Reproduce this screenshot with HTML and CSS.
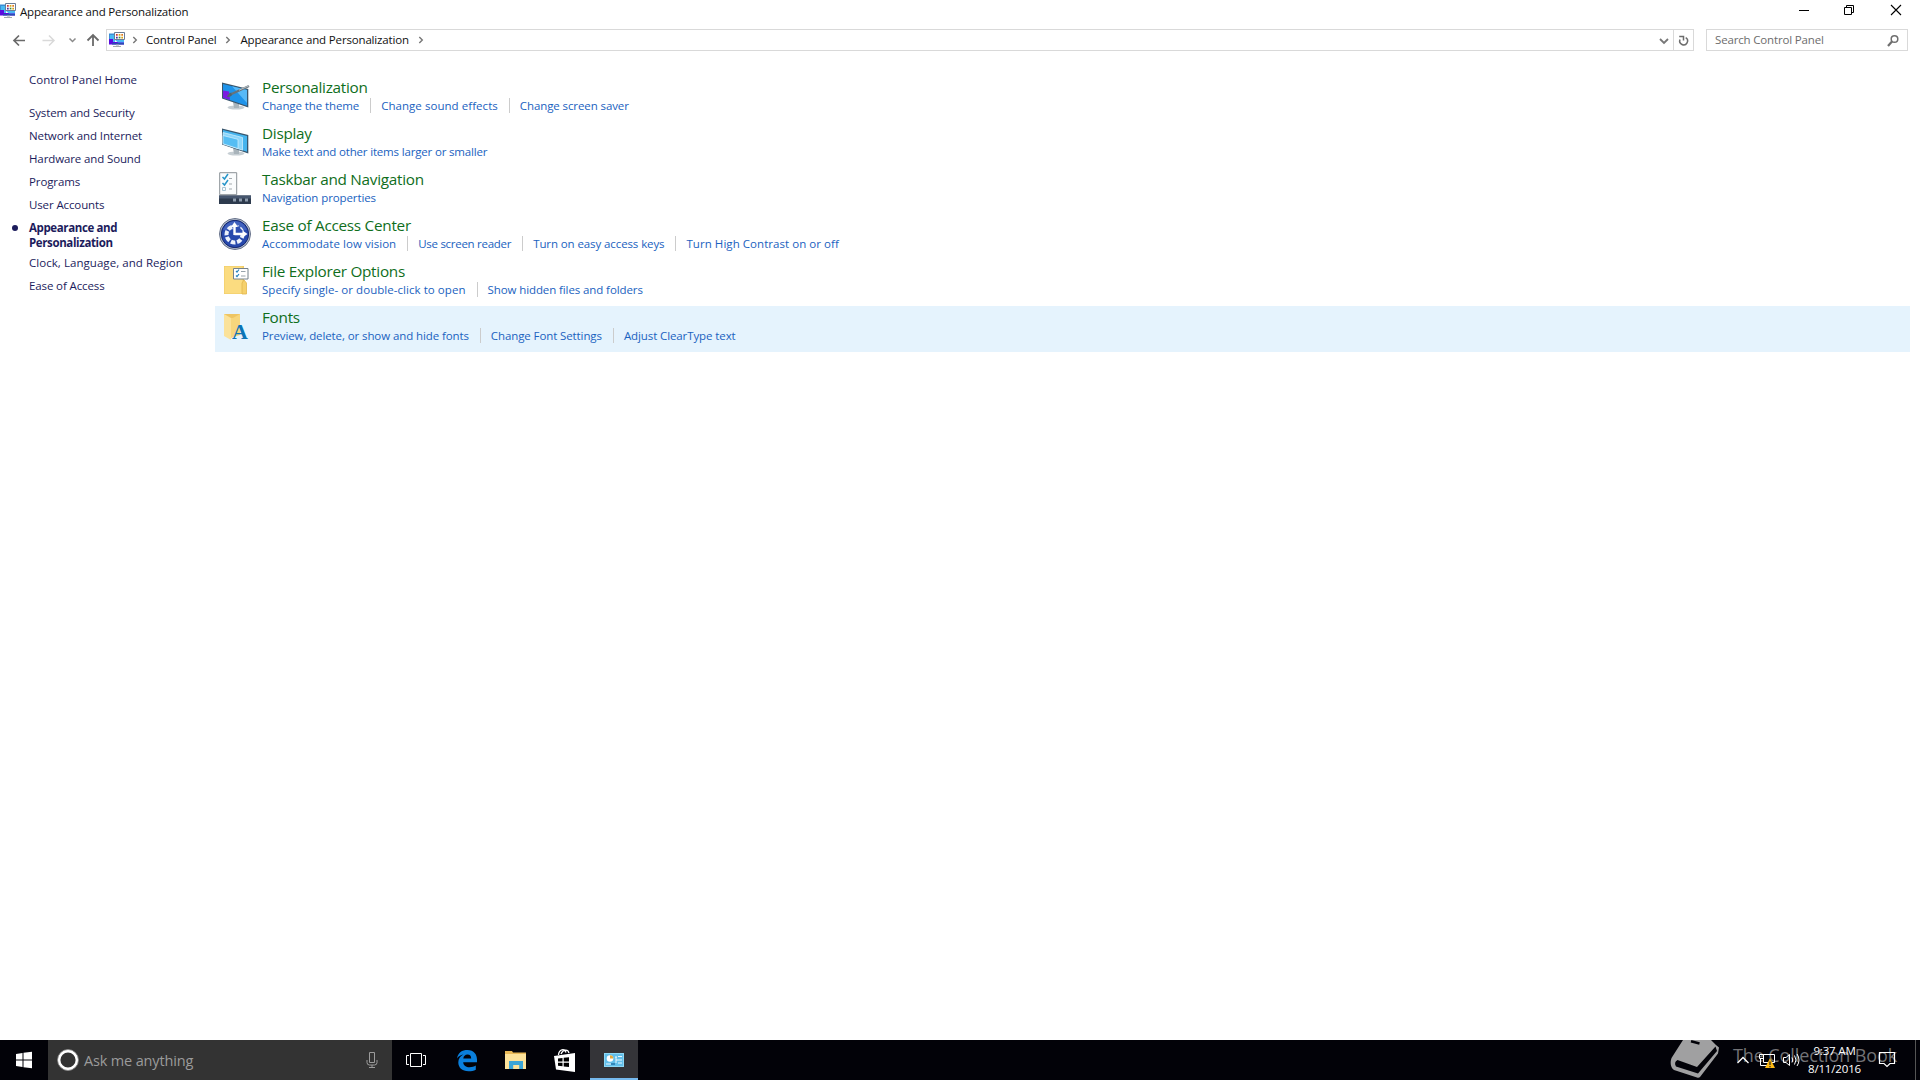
FILE: index.html
```html
<!DOCTYPE html>
<html lang="en">
<head>
    <meta charset="UTF-8">
    <meta name="viewport" content="width=device-width, initial-scale=1.0">
    <title>Appearance and Personalization</title>
    <link rel="stylesheet" href="styles.css">
</head>
<body>
    <!-- Shared icon, used in the title bar and the address bar -->
    <svg class="defs" width="0" height="0">
        <symbol id="cp-icon" viewBox="0 0 16 16">
            <path d="M0 1.5h6v10H0z" fill="#3b8fd6"/>
            <path d="M1 3h5v8H1z" fill="#49b9f2"/>
            <path d="M0 7h4v3h11v2.500H0z" fill="#5a0be0"/>
            <path d="M6 8h9v2.500H9z" fill="#49b9f2"/>
            <path d="M3 11h12v1.500H3z" fill="#2a4fae"/>
            <path d="M7 12.500h3v1H7zM4 14h8v1H4z" fill="#a4abb0"/>
            <path d="M5.500.5h10v7h-10z" fill="#fff" stroke="#6b7d96"/>
            <path d="M7 2h1.700v1.700H7z" fill="#c33"/>
            <path d="M9.700 2h1.700v1.700H9.700zM12.300 4.700H14v1.700h-1.700z" fill="#d9a514"/>
            <path d="M12.300 2H14v1.700h-1.700z" fill="#e07b1e"/>
            <path d="M7 4.700h1.700v1.700H7z" fill="#4a2aa0"/>
            <path d="M9.700 4.700h1.700v1.700H9.700z" fill="#388e3c"/>
        </symbol>
    </svg>

    <div class="window">
        <header class="title-bar">
            <svg class="small-icon" viewBox="0 0 16 16"><use href="#cp-icon"/></svg>
            <span class="window-title">Appearance and Personalization</span>
            <div class="window-buttons">
                <svg viewBox="0 0 46 20"><path d="M18 10.500h10" stroke="#000"/></svg>
                <svg viewBox="0 0 46 20"><path d="M17.500 7.500h7v7h-7zM19.500 7.500v-2h7v7h-2" fill="none" stroke="#000"/></svg>
                <svg viewBox="0 0 46 20"><path d="M18 5l10 10M28 5L18 15" stroke="#000" stroke-width="1.100"/></svg>
            </div>
        </header>

        <nav class="nav-bar">
            <svg class="nav-arrows" width="106" height="22" viewBox="0 0 106 22" fill="none">
                <path d="M25 11.500H14M19 6.500l-5 5 5 5" stroke="#6a6a6a" stroke-width="1.700"/>
                <path d="M42.500 11.500H54M49 6.500l5 5-5 5" stroke="#d9d9d9" stroke-width="1.500"/>
                <path d="M69.500 9.500l3 3 3-3" stroke="#8a8a8a" stroke-width="1.500"/>
                <path d="M93 17V6M87.500 11.500L93 6l5.500 5.500" stroke="#6a6a6a" stroke-width="1.800"/>
            </svg>
            <div class="address">
                <svg class="small-icon" viewBox="0 0 16 16"><use href="#cp-icon"/></svg>
                <svg class="crumb-arrow" viewBox="0 0 6 8"><path d="M1.300 1l3 3-3 3"/></svg>
                <span>Control Panel</span>
                <svg class="crumb-arrow" viewBox="0 0 6 8"><path d="M1.300 1l3 3-3 3"/></svg>
                <span>Appearance and Personalization</span>
                <svg class="crumb-arrow" viewBox="0 0 6 8"><path d="M1.300 1l3 3-3 3"/></svg>
                <svg class="address-drop" viewBox="0 0 18 20"><path d="M5 9l4 4 4-4" fill="none" stroke="#777" stroke-width="1.800"/></svg>
                <svg class="refresh" viewBox="0 0 20 20" fill="none" stroke="#6c6c6c" stroke-width="1.600"><path d="M12.300 7.500A4.100 4.100 0 1 1 6.300 9.500M5.500 6.300H10V10.500"/></svg>
            </div>
            <div class="search">
                <span>Search Control Panel</span>
                <svg width="14" height="14" viewBox="0 0 14 14" fill="none" stroke="#6f6f6f"><circle cx="8.500" cy="6" r="3.300" stroke-width="1.500"/><path d="M6 8.500L2 13" stroke-width="2.200"/></svg>
            </div>
        </nav>

        <div class="content">
            <aside class="sidebar">
                <a class="home">Control Panel Home</a>
                <a>System and Security</a>
                <a>Network and Internet</a>
                <a>Hardware and Sound</a>
                <a>Programs</a>
                <a>User Accounts</a>
                <a class="current">Appearance and Personalization</a>
                <a class="loose">Clock, Language, and Region</a>
                <a>Ease of Access</a>
            </aside>

            <main class="categories">
                <section class="category">
                    <svg class="icon" viewBox="0 0 32 32">
                        <ellipse cx="17" cy="27.500" rx="8.500" ry="2" fill="#c6ced3"/>
                        <path d="M14 22l6 2v4h-5z" fill="#a9b4bb"/>
                        <path d="M3 2.500L29.300 9v18.500L3 18.500z" fill="#38566d"/>
                        <path d="M4 4l24 6v15.700L4 17.800z" fill="#1e93ea"/>
                        <path d="M13 6.300L28 10v13z" fill="#57b9f7"/>
                        <path d="M4 10.500l6 1 1 8.500-7-2.200z" fill="#7a1be0"/>
                        <path d="M8 17c1-3 3-5 5-4 1 2-1 4-5 4z" fill="#51636e"/>
                        <path d="M12.500 14L30 6" stroke="#67737b" stroke-width="2"/>
                        <path d="M20 10.200L30 5.700" stroke="#cfd6da" stroke-width=".8"/>
                    </svg>
                    <div class="text">
                        <h2>Personalization</h2>
                        <div class="links"><a>Change the theme</a><a class="loose">Change sound effects</a><a>Change screen saver</a></div>
                    </div>
                </section>
                <section class="category">
                    <svg class="icon" viewBox="0 0 32 32">
                        <ellipse cx="17" cy="27.500" rx="8.500" ry="2" fill="#c6ced3"/>
                        <path d="M14 22l6 2v4h-5z" fill="#a9b4bb"/>
                        <path d="M3 2.500L29.300 9v18.500L3 18.500z" fill="#38566d"/>
                        <path d="M4 4l24 6v15.700L4 17.800z" fill="#45b4ee"/>
                        <path d="M4 6.500l19.500 5v12.700L4 17.800z" fill="#8bd6fb" stroke="#d5f1fd" stroke-width=".7"/>
                        <path d="M4 9.500l15 3.800v9.300L4 17.800z" fill="#55bdf3" stroke="#d5f1fd" stroke-width=".7"/>
                    </svg>
                    <div class="text">
                        <h2>Display</h2>
                        <div class="links"><a class="tight">Make text and other items larger or smaller</a></div>
                    </div>
                </section>
                <section class="category">
                    <svg class="icon" viewBox="0 0 32 32">
                        <path d="M.7.700h17v22h-17z" fill="#fafcfd" stroke="#8b9297"/>
                        <path d="M3.500 5l2 2 3.500-5M3.500 11l2 2 3.500-5" fill="none" stroke="#2795c9" stroke-width="1.500"/>
                        <path d="M3.500 15.500h3v3h-3z" fill="none" stroke="#a8c4d3"/>
                        <path d="M10 6.500h3M10 12h3M10 17h3" stroke="#a3a9ad"/>
                        <path d="M0 23.500h32V32H0z" fill="#2d3a4d"/>
                        <path d="M0 23.500h32v3H0z" fill="#46566e"/>
                        <path d="M14 26.500h3v3h-3zM20 26.500h3v3h-3zM26 26.500h3v3h-3z" fill="#8e9cad"/>
                    </svg>
                    <div class="text">
                        <h2>Taskbar and Navigation</h2>
                        <div class="links"><a>Navigation properties</a></div>
                    </div>
                </section>
                <section class="category">
                    <svg class="icon" viewBox="0 0 32 32">
                        <circle cx="16" cy="16" r="15.500" fill="#b9c2cf" stroke="#66718a"/>
                        <circle cx="16" cy="16" r="13.700" fill="#2749ad" stroke="#14256d"/>
                        <path d="M4 12a12.500 12.500 0 0 1 24 0z" fill="#5272c8" opacity=".6"/>
                        <circle cx="15.500" cy="16.500" r="8" fill="none" stroke="#edf2fb" stroke-width="4" stroke-dasharray="4.600 1.683" stroke-dashoffset="1"/>
                        <path d="M15.500 4.500L27 16H15.500z" fill="#2f50b2"/>
                        <path d="M15.500 17V8M15.500 16H24" stroke="#fff" stroke-width="2.400"/>
                        <path d="M12 9l3.500-5L19 9zM23.500 12.500l5 3.500-5 3.500z" fill="#fff"/>
                    </svg>
                    <div class="text">
                        <h2>Ease of Access Center</h2>
                        <div class="links"><a class="loose">Accommodate low vision</a><a class="tighter">Use screen reader</a><a>Turn on easy access keys</a><a class="loose">Turn High Contrast on or off</a></div>
                    </div>
                </section>
                <section class="category">
                    <svg class="icon" viewBox="0 0 32 32">
                        <path d="M5 2h20v28H5z" fill="#f0ca64"/>
                        <path d="M5.500 2.500h18v27h-18z" fill="#fbdc80"/>
                        <path d="M23 30V19l2-3 2.500 3v11z" fill="#f6d16c" stroke="#e2b64e" stroke-width=".8"/>
                        <path d="M14.500 4.500H29V15H14.500z" fill="#fff" stroke="#75828c"/>
                        <path d="M17 7l1 1 2-2.500M17 11.500l1 1 2-2.500" fill="none" stroke="#2582bb" stroke-width="1.200"/>
                        <path d="M22 7.500h4.500M22 12h4.500" stroke="#98a4ac"/>
                    </svg>
                    <div class="text">
                        <h2>File Explorer Options</h2>
                        <div class="links"><a class="loose">Specify single- or double-click to open</a><a>Show hidden files and folders</a></div>
                    </div>
                </section>
                <section class="category hovered">
                    <svg class="icon" viewBox="0 0 32 32">
                        <path d="M5 4h16v21H5z" fill="#eec563"/>
                        <path d="M5 4l7 4v22l-7-4z" fill="#fbe29a"/>
                        <path d="M12 8h2l7-4v21l-9 3z" fill="#f7d67c"/>
                        <text class="font-letter" x="13" y="29" fill="#0b74b5">A</text>
                    </svg>
                    <div class="text">
                        <h2>Fonts</h2>
                        <div class="links"><a>Preview, delete, or show and hide fonts</a><a>Change Font Settings</a><a>Adjust ClearType text</a></div>
                    </div>
                </section>
            </main>
        </div>
    </div>

    <footer class="taskbar">
        <svg class="start" viewBox="0 0 48 40"><path d="M16 14l6.500-1v6.500H16zM23.500 12.800L32 11.700v7.800h-8.500zM16 20.500h6.500V27L16 26zM23.500 20.500H32v7.800l-8.500-1.100z" fill="#fff"/></svg>
        <div class="cortana">
            <svg width="22" height="22" viewBox="0 0 22 22"><circle cx="11" cy="11" r="9" fill="none" stroke="#fff" stroke-width="2.800"/><circle cx="11" cy="11" r="10.500" fill="none" stroke="#8b8b8b" stroke-width=".8"/></svg>
            <span>Ask me anything</span>
            <svg class="mic" width="12" height="18" viewBox="0 0 12 18" fill="none" stroke="#9b9b9b"><path d="M3.500 1.500h5v10h-5zM1 9v2.500q0 2.500 2.500 2.500h5q2.500 0 2.500-2.500V9M6 14v2.500M3 16.500h6"/></svg>
        </div>
        <div class="apps">
            <svg class="task-view" viewBox="0 0 48 40"><path d="M18.500 13.500h11v13h-11zM17 15.500h-2.500v9H17M31 15.500h2.500v9H31" fill="none" stroke="#fff"/></svg>
            <svg viewBox="0 0 48 40"><path d="M14 18.500C15 12.500 19 10 24.500 10 31 10 34 14.500 34 19.500v2.700H20.200c.2 3.500 3 5 6.300 5 2.500 0 4.700-.7 6.300-1.700v4.200c-2 1.100-4.500 1.600-7.300 1.600-6.500 0-10.200-3.800-10.200-9 0-3.800 2.200-6.500 5.200-7.900-3 .3-5.200 2-6.500 4.100zM20.300 18.500h7.900c0-2.400-1.200-3.900-3.700-3.900-2.400 0-3.900 1.700-4.200 3.900z" fill="#0a7fdc"/></svg>
            <svg viewBox="0 0 48 40"><path d="M13 11h7l1 1.500h13V29H13z" fill="#e9b957"/><path d="M13 14h21v15H13z" fill="#fce29a"/><path d="M17 29v-8h14v8h-3.800v-4h-6v4z" fill="#3ba5d6"/></svg>
            <svg viewBox="0 0 48 40"><path d="M17.500 15c.5-6 6-7 7.500-2.500M20 14c2-5 7-5 8-1" fill="none" stroke="#fff" stroke-width="1.300"/><path d="M13 16l21-3v19l-19-2.500z" fill="#fff"/><path d="M17 18.500l4.500-.5v3.500H17zM22.700 17.800l5.300-.6v4.300h-5.300zM17 22.700h4.500v3.600l-4.500-.5zM22.700 22.700H28V27l-5.300-.6z" fill="#000"/></svg>
            <svg class="running" viewBox="0 0 48 38"><path d="M14 13h20v14H14z" fill="#8ed8f5"/><path d="M15 14h18v12H15z" fill="#62bee9"/><circle cx="20" cy="18.500" r="3.300" fill="#fff"/><path d="M20 18.500v-3.300a3.300 3.300 0 0 1 3.300 3.300z" fill="#e5a93d"/><path d="M25 17h2m-1 0v6m0-3h2M28 16.500h4M28 20h4M28 23h4M16 24h5" stroke="#e8f8ff"/><path d="M21 24h4" stroke="#2475a8" stroke-width="1.500"/></svg>
        </div>
        <div class="tray">
            <svg width="14" height="40" viewBox="0 0 14 40"><path d="M1.500 23L7 17.500l5.500 5.500" fill="none" stroke="#fff" stroke-width="1.300"/></svg>
            <svg class="network" width="18" height="40" viewBox="0 0 18 40"><path d="M5.500 14.500h11v8h-11zM1.500 14.500h4v4h-4zM2.500 19v6.500H9M11 23v3" fill="none" stroke="#fff"/><path d="M12 18l5 10H7z" fill="#fdb913"/><path d="M12 21.500v3.500M12 26v1.200" stroke="#222" stroke-width="1.200"/></svg>
            <svg class="volume" width="18" height="40" viewBox="0 0 18 40"><path d="M1.500 17.500H4l3.500-3v11L4 22.500H1.500zM10 17.500q1.500 2.500 0 5M12.500 15.500q3 4.500 0 9M15 14q4 6 0 12" fill="none" stroke="#fff"/></svg>
            <div class="clock">
                <span>9:37 AM</span>
                <span>8/11/2016</span>
            </div>
            <svg class="action-center" width="18" height="40" viewBox="0 0 18 40"><path d="M1.500 12.500h15v11H12l-3 3-3-3H1.500z" fill="none" stroke="#fff" stroke-width="1.200"/></svg>
            <span class="show-desktop"></span>
        </div>
        <div class="watermark">
            <svg width="51" height="40" viewBox="0 0 51 40">
                <path d="M13 0H41L46 5l3 2.500-1 6L30 37q-1 1.200-3 .6L4 30Q-1 26 1.500 18z" fill="#a0a0a1"/>
                <path d="M7.500 20L27 27 45.500 6.500 47 11 28 33.500 6 26.500Q3.500 22 7.500 20z" fill="#020208"/>
                <path d="M21 1.300l8.500 2.200" stroke="#020208" stroke-width="2.500"/>
            </svg>
            <span>The Collection Book</span>
        </div>
    </footer>
</body>
</html>
```
FILE: styles.css
```css
:root {
    --border: #d9d9d9;
    --link: #1a62c0;
    --heading: #0f6e1c;
    --side: #1c1c5c;
}

* {
    margin: 0;
    padding: 0;
    box-sizing: border-box;
}

body {
    width: 1920px;
    height: 1080px;
    overflow: hidden;
    display: flex;
    flex-direction: column;
    background: #fff;
    color: #111;
    font-family: "Open Sans", "Noto Sans", sans-serif;
    font-size: 11.5px;
    letter-spacing: -0.16px;
    white-space: nowrap;
}

svg {
    display: block;
    flex-shrink: 0;
}

.defs {
    position: absolute;
}

.window {
    flex: 1;
}

.small-icon {
    width: 16px;
    height: 16px;
}

/* Title bar */
.title-bar {
    display: flex;
    align-items: center;
    height: 23px;
}

.title-bar .small-icon {
    margin-bottom: 2px;
}

.window-title {
    margin-left: 4px;
}

.window-buttons {
    display: flex;
    margin: 0 1px 3px auto;
}

.window-buttons svg {
    width: 46px;
    height: 20px;
}

/* Navigation bar */
.nav-bar {
    display: flex;
    align-items: center;
    height: 22px;
    margin-top: 6px;
    padding-right: 12px;
}

.address {
    display: flex;
    align-items: center;
    flex: 1;
    height: 22px;
    padding-left: 2px;
    border: 1px solid var(--border);
}

.address span,
.search span {
    margin-bottom: 2px;
}

.address .small-icon {
    margin-bottom: 1px;
}

.crumb-arrow {
    width: 6px;
    height: 8px;
    margin: 0 9px;
    fill: none;
    stroke: #777;
    stroke-width: 1.4;
}

.address .small-icon + .crumb-arrow {
    margin: 0 8px 0 7px;
}

.address-drop {
    width: 18px;
    height: 20px;
    margin-left: auto;
}

.refresh {
    width: 20px;
    height: 20px;
    border-left: 1px solid var(--border);
}

.search {
    display: flex;
    align-items: center;
    justify-content: space-between;
    width: 202px;
    height: 22px;
    margin-left: 12px;
    padding: 0 7px 0 8px;
    border: 1px solid var(--border);
    color: #6d6d6d;
}

/* Content */
.content {
    display: flex;
    padding-right: 10px;
}

.sidebar {
    display: flex;
    flex-direction: column;
    gap: 8px;
    width: 215px;
    padding: 21px 0 0 29px;
    color: var(--side);
    line-height: 15px;
    letter-spacing: -0.12px;
}

.sidebar .home {
    margin-bottom: 10px;
    letter-spacing: 0;
}

.sidebar .current {
    position: relative;
    width: 120px;
    margin-bottom: -3px;
    font-weight: bold;
    letter-spacing: -0.38px;
    white-space: normal;
}

.sidebar .current::before {
    content: "";
    position: absolute;
    left: -17px;
    top: 5px;
    width: 6px;
    height: 6px;
    border-radius: 50%;
    background: var(--side);
}

.categories {
    flex: 1;
    padding-top: 25px;
}

.category {
    display: flex;
    height: 46px;
    padding: 4px;
}

.category.hovered {
    background: #e5f3fd;
}

.icon {
    width: 32px;
    height: 32px;
    overflow: visible;
}

.font-letter {
    font-family: "Liberation Serif", serif;
    font-size: 22px;
    font-weight: bold;
}

.text {
    margin-left: 11px;
}

.category h2 {
    height: 18px;
    color: var(--heading);
    font-size: 15.3px;
    font-weight: normal;
    line-height: 14px;
    letter-spacing: -0.27px;
}

.links {
    display: flex;
    color: var(--link);
    line-height: 15px;
    letter-spacing: -0.1px;
}

.links a + a {
    margin-left: 11px;
    padding-left: 10px;
    border-left: 1px solid #ccc;
}

.tight {
    letter-spacing: -0.17px;
}

.tighter {
    letter-spacing: -0.28px;
}

.loose {
    letter-spacing: 0.05px;
}

/* Taskbar */
.taskbar {
    position: relative;
    display: flex;
    height: 40px;
    background: #020208;
    color: #fff;
}

.start {
    width: 48px;
    height: 40px;
}

.cortana {
    display: flex;
    align-items: center;
    width: 344px;
    padding: 0 14px 0 9px;
    background: #333;
    color: #9b9b9b;
    font-size: 14.5px;
}

.cortana span {
    margin-left: 5px;
}

.mic {
    margin-left: auto;
}

.apps {
    display: flex;
    gap: 1px;
}

.apps svg {
    width: 48px;
    height: 40px;
}

.apps .task-view {
    margin-right: 2px;
}

.apps .running {
    background: #343438;
    border-bottom: 2px solid #76b9ed;
}

.tray {
    position: relative;
    z-index: 1;
    display: flex;
    margin-left: auto;
}

.network {
    margin-left: 8px;
}

.volume {
    margin-left: 6px;
}

.clock {
    display: flex;
    flex-direction: column;
    align-items: center;
    width: 69px;
    padding-top: 2px;
    line-height: 18px;
}

.action-center {
    margin-left: 9px;
}

.show-desktop {
    width: 5px;
    margin-left: 19px;
    border-left: 1px solid #555;
}

.watermark {
    position: absolute;
    left: 1670px;
    top: 0;
    display: flex;
    align-items: center;
    color: #737376;
    font-size: 18px;
    letter-spacing: -0.1px;
}

.watermark span {
    margin: -10px 0 0 12px;
}
```
